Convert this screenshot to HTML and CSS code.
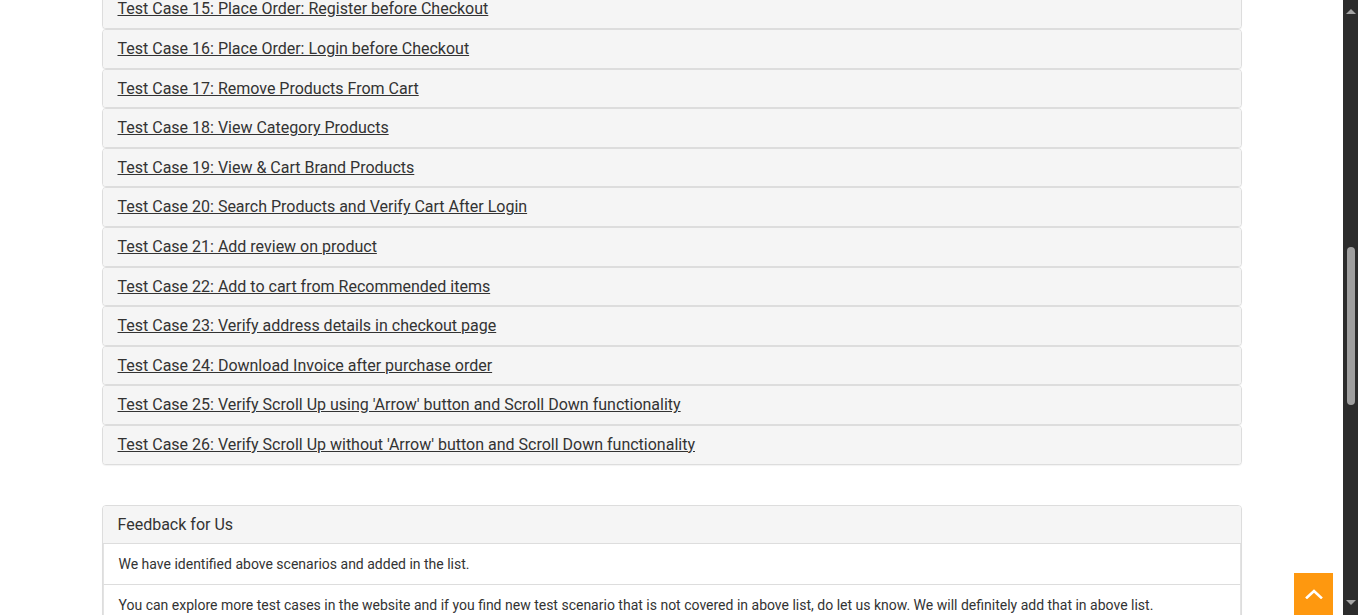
FILE: index.html
```html
<!DOCTYPE html>
<html>
<head>
<meta charset="utf-8">
<link rel="stylesheet" href="styles.css">
</head>
<body>
<div class="page">
  <div class="container">
    <div class="cases">
      <div class="panel"><div class="panel-heading"><a href="#">Test Case 15: Place Order: Register before Checkout</a></div></div>
      <div class="panel"><div class="panel-heading"><a href="#">Test Case 16: Place Order: Login before Checkout</a></div></div>
      <div class="panel"><div class="panel-heading"><a href="#">Test Case 17: Remove Products From Cart</a></div></div>
      <div class="panel"><div class="panel-heading"><a href="#">Test Case 18: View Category Products</a></div></div>
      <div class="panel"><div class="panel-heading"><a href="#">Test Case 19: View &amp; Cart Brand Products</a></div></div>
      <div class="panel"><div class="panel-heading"><a href="#">Test Case 20: Search Products and Verify Cart After Login</a></div></div>
      <div class="panel"><div class="panel-heading"><a href="#">Test Case 21: Add review on product</a></div></div>
      <div class="panel"><div class="panel-heading"><a href="#">Test Case 22: Add to cart from Recommended items</a></div></div>
      <div class="panel"><div class="panel-heading"><a href="#">Test Case 23: Verify address details in checkout page</a></div></div>
      <div class="panel"><div class="panel-heading"><a href="#">Test Case 24: Download Invoice after purchase order</a></div></div>
      <div class="panel"><div class="panel-heading"><a href="#">Test Case 25: Verify Scroll Up using 'Arrow' button and Scroll Down functionality</a></div></div>
      <div class="panel"><div class="panel-heading"><a href="#">Test Case 26: Verify Scroll Up without 'Arrow' button and Scroll Down functionality</a></div></div>
    </div>
    <div class="panel feedback">
      <div class="panel-heading"><span class="title">Feedback for Us</span></div>
      <ul class="list-group">
        <li class="list-item">We have identified above scenarios and added in the list.</li>
        <li class="list-item">You can explore more test cases in the website and if you find new test scenario that is not covered in above list, do let us know. We will definitely add that in above list.</li>
      </ul>
    </div>
  </div>
</div>
<a href="#" class="scroll-up" aria-label="Scroll up">
  <svg width="18" height="10" viewBox="0 0 18 10"><polyline points="2,8.5 9,2 16,8.5" fill="none" stroke="#fff" stroke-width="2.6" stroke-linecap="square"/></svg>
</a>
<div class="scrollbar">
  <div class="sb-up"></div>
  <div class="sb-track"><div class="sb-thumb"></div></div>
  <div class="sb-down"></div>
</div>
</body>
</html>
```

FILE: styles.css
```css
html, body {
  margin: 0;
  padding: 0;
  height: 615px;
  overflow: hidden;
  background: #fff;
}
body {
  font-family: Roboto, "Liberation Sans", sans-serif;
  color: #333;
}
.page {
  margin-right: 15px;
}
.container {
  width: 1140px;
  margin: -10.6px auto 0;
}
.panel {
  border: 1px solid #ddd;
  border-radius: 4px;
  background: #fff;
  box-shadow: 0 1px 1px rgba(0,0,0,0.05);
}
.panel-heading {
  background: #f5f5f5;
  padding: 10px 15px;
  font-size: 16px;
  line-height: 17.6px;
  border-radius: 3px;
}
.panel-heading a {
  color: #333;
  text-decoration: underline;
}
.cases {
  display: flex;
  flex-direction: column;
}
.feedback {
  margin-top: 40px;
}
.feedback .panel-heading {
  border-bottom: 1px solid #ddd;
  border-radius: 3px 3px 0 0;
}
.title {
  color: #333;
}
.list-group {
  list-style: none;
  margin: 0;
  padding: 0;
}
.list-item {
  font-size: 14px;
  line-height: 20px;
  padding: 10px 15px;
  border-left: 1px solid #e3e3e3;
  border-right: 1px solid #e3e3e3;
  border-bottom: 1px solid #ddd;
  color: #333;
}
.scroll-up {
  position: fixed;
  right: 25px;
  bottom: 0;
  width: 39px;
  height: 42px;
  background: #fe980f;
  display: flex;
  align-items: center;
  justify-content: center;
}
.scrollbar {
  position: fixed;
  top: 0;
  right: 0;
  width: 15px;
  height: 615px;
  background: #2c2c2c;
  display: flex;
  flex-direction: column;
  align-items: center;
}
.sb-up {
  margin-top: 9px;
  width: 0;
  height: 0;
  border-left: 5px solid transparent;
  border-right: 5px solid transparent;
  border-bottom: 5px solid #a3a3a3;
}
.sb-track {
  flex: 1;
  width: 100%;
  display: flex;
  justify-content: center;
}
.sb-thumb {
  margin-top: 233px;
  width: 8px;
  height: 158px;
  border-radius: 4px;
  background: #9f9f9f;
}
.sb-down {
  margin-bottom: 10px;
  width: 0;
  height: 0;
  border-left: 5px solid transparent;
  border-right: 5px solid transparent;
  border-top: 5px solid #a3a3a3;
}
```
